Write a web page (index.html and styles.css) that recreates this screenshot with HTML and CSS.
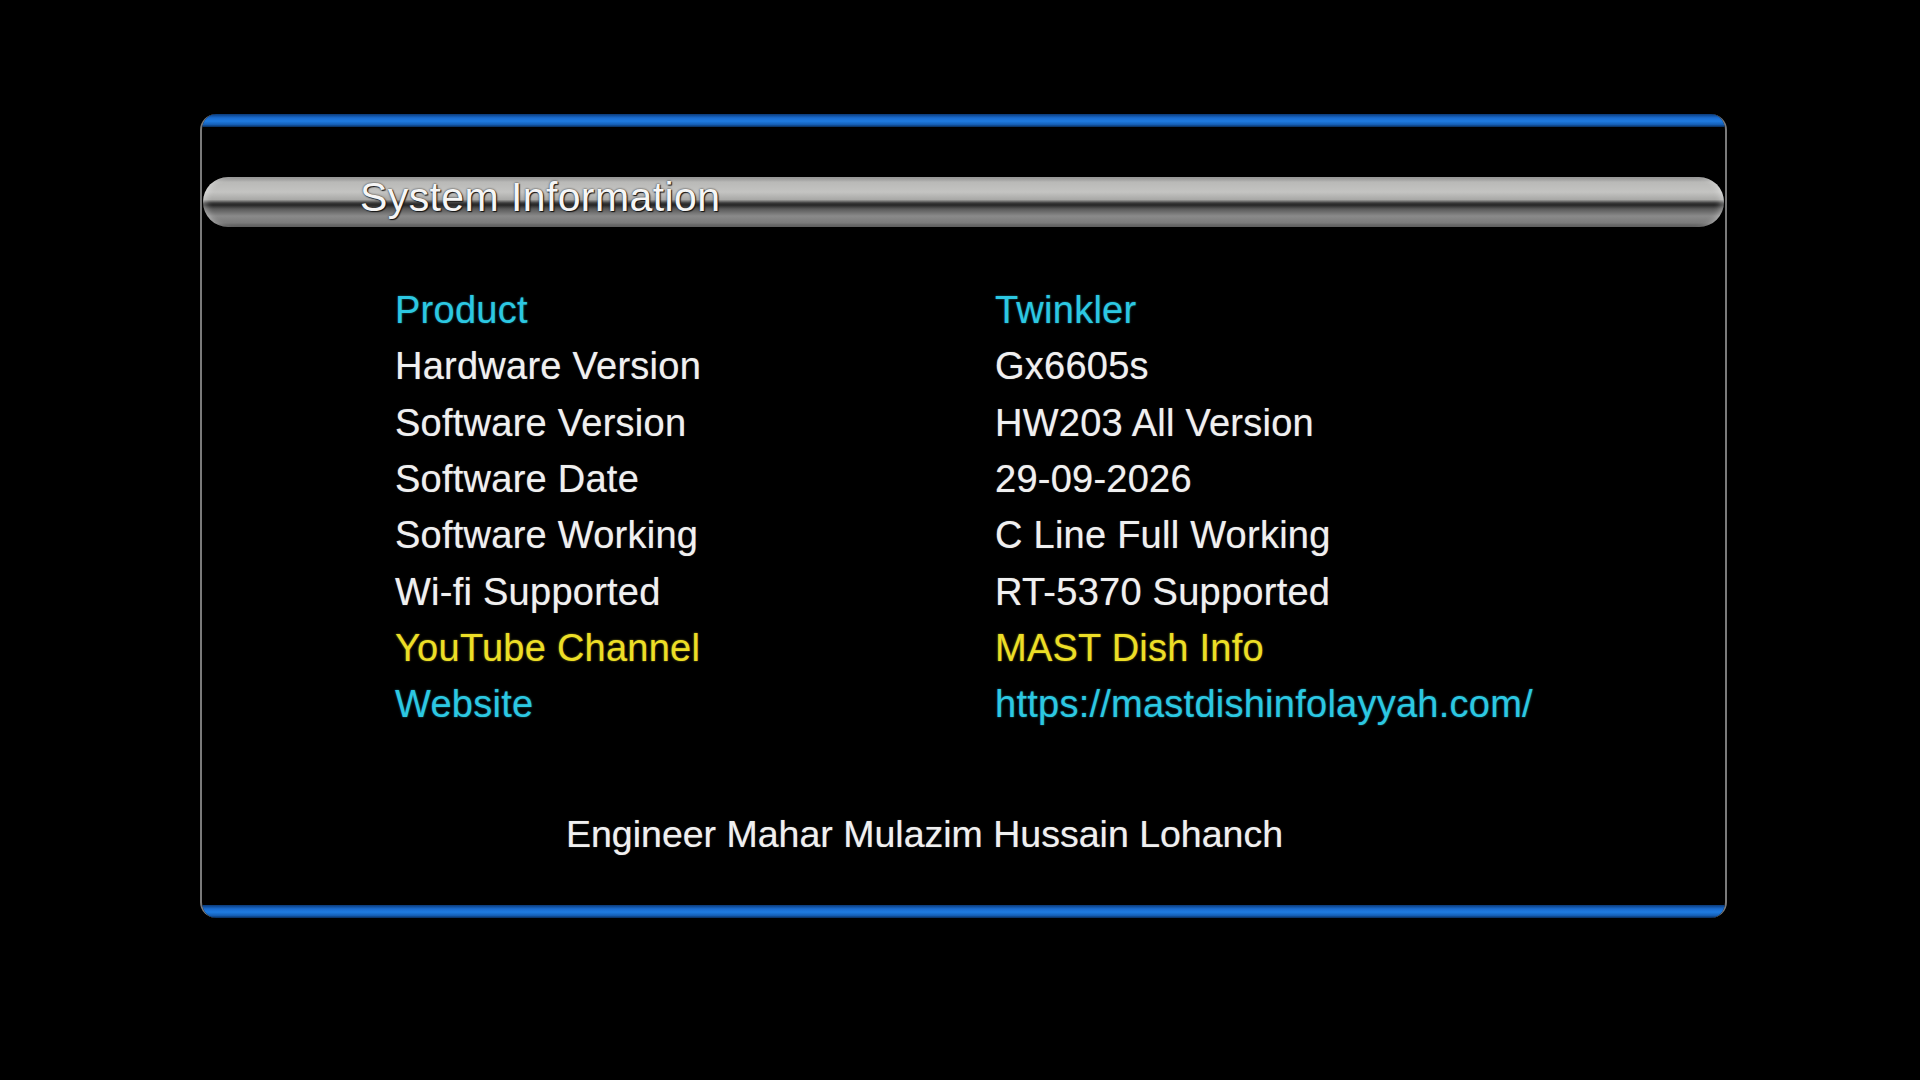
FILE: index.html
```html
<!DOCTYPE html>
<html lang="en">
<head>
<meta charset="utf-8">
<title>System Information</title>
<link rel="stylesheet" href="styles.css">
</head>
<body>
<div class="screen">
  <div class="panel">
    <div class="bar-top"></div>
    <div class="title-bar"><span class="title">System Information</span></div>
    <div class="info">
      <div class="label cyan">Product</div><div class="value cyan">Twinkler</div>
      <div class="label">Hardware Version</div><div class="value">Gx6605s</div>
      <div class="label">Software Version</div><div class="value">HW203 All Version</div>
      <div class="label">Software Date</div><div class="value">29-09-2026</div>
      <div class="label">Software Working</div><div class="value">C Line Full Working</div>
      <div class="label">Wi-fi Supported</div><div class="value">RT-5370 Supported</div>
      <div class="label yellow">YouTube Channel</div><div class="value yellow">MAST Dish Info</div>
      <div class="label cyan">Website</div><div class="value cyan">https://mastdishinfolayyah.com/</div>
    </div>
    <div class="credit">Engineer Mahar Mulazim Hussain Lohanch</div>
    <div class="bar-bottom"></div>
  </div>
</div>
</body>
</html>
```

FILE: styles.css
```css
html, body {
  margin: 0;
  padding: 0;
  background: #000;
  width: 1920px;
  height: 1080px;
  overflow: hidden;
  font-family: "Liberation Sans", Arial, sans-serif;
}

.screen {
  padding: 114px 0 0 200px;
}

.panel {
  box-sizing: border-box;
  width: 1527px;
  height: 804px;
  border-left: 2px solid #7a7a7a;
  border-right: 2px solid #7a7a7a;
  border-radius: 16px;
  overflow: hidden;
  display: flex;
  flex-direction: column;
}

.bar-top,
.bar-bottom {
  height: 13px;
  background: linear-gradient(to bottom, #0b3a78 0%, #1a6cd0 30%, #1f7be0 55%, #1560b8 80%, #082c5a 100%);
  flex: none;
}

.bar-bottom {
  margin-top: auto;
}

.title-bar {
  margin: 50px 1px 0 1px;
  height: 50px;
  border-radius: 25px;
  background: linear-gradient(to bottom,
    #8a8a8a 0%,
    #b9b9b7 10%,
    #c4c4c2 30%,
    #a9a9a7 45%,
    #3a3a3a 52%,
    #262626 56%,
    #5a5a5a 64%,
    #8a8a8a 78%,
    #7a7a7a 92%,
    #4a4a4a 100%);
  box-shadow: inset 6px 0 6px -3px rgba(255,255,255,0.35), inset -6px 0 6px -3px rgba(255,255,255,0.35);
  display: flex;
  align-items: center;
  padding-left: 157px;
  flex: none;
}

.title {
  color: #f6f6f6;
  font-size: 41px;
  line-height: 1;
  letter-spacing: 0.4px;
  margin-top: -10px;
  text-shadow: 0 0 2px #222, 1px 1px 1px #111;
}

.info {
  margin-top: 55px;
  padding-left: 193px;
  display: grid;
  grid-template-columns: 600px auto;
  grid-auto-rows: 56.3px;
  align-items: center;
}

.label,
.value {
  font-size: 38px;
  line-height: 56px;
  letter-spacing: 0.25px;
  color: #f0f0f0;
  white-space: nowrap;
  text-shadow: 0 0 1px rgba(255,255,255,0.5);
}

.cyan {
  color: #2cc8e2;
  text-shadow: 0 0 2px rgba(44,200,226,0.6);
}

.yellow {
  color: #ecde26;
  text-shadow: 0 0 2px rgba(236,222,38,0.6);
}

.credit {
  margin-top: 74px;
  padding-left: 364px;
  font-size: 37.5px;
  line-height: 56px;
  color: #f0f0f0;
  white-space: nowrap;
  text-shadow: 0 0 1px rgba(255,255,255,0.5);
}
```
